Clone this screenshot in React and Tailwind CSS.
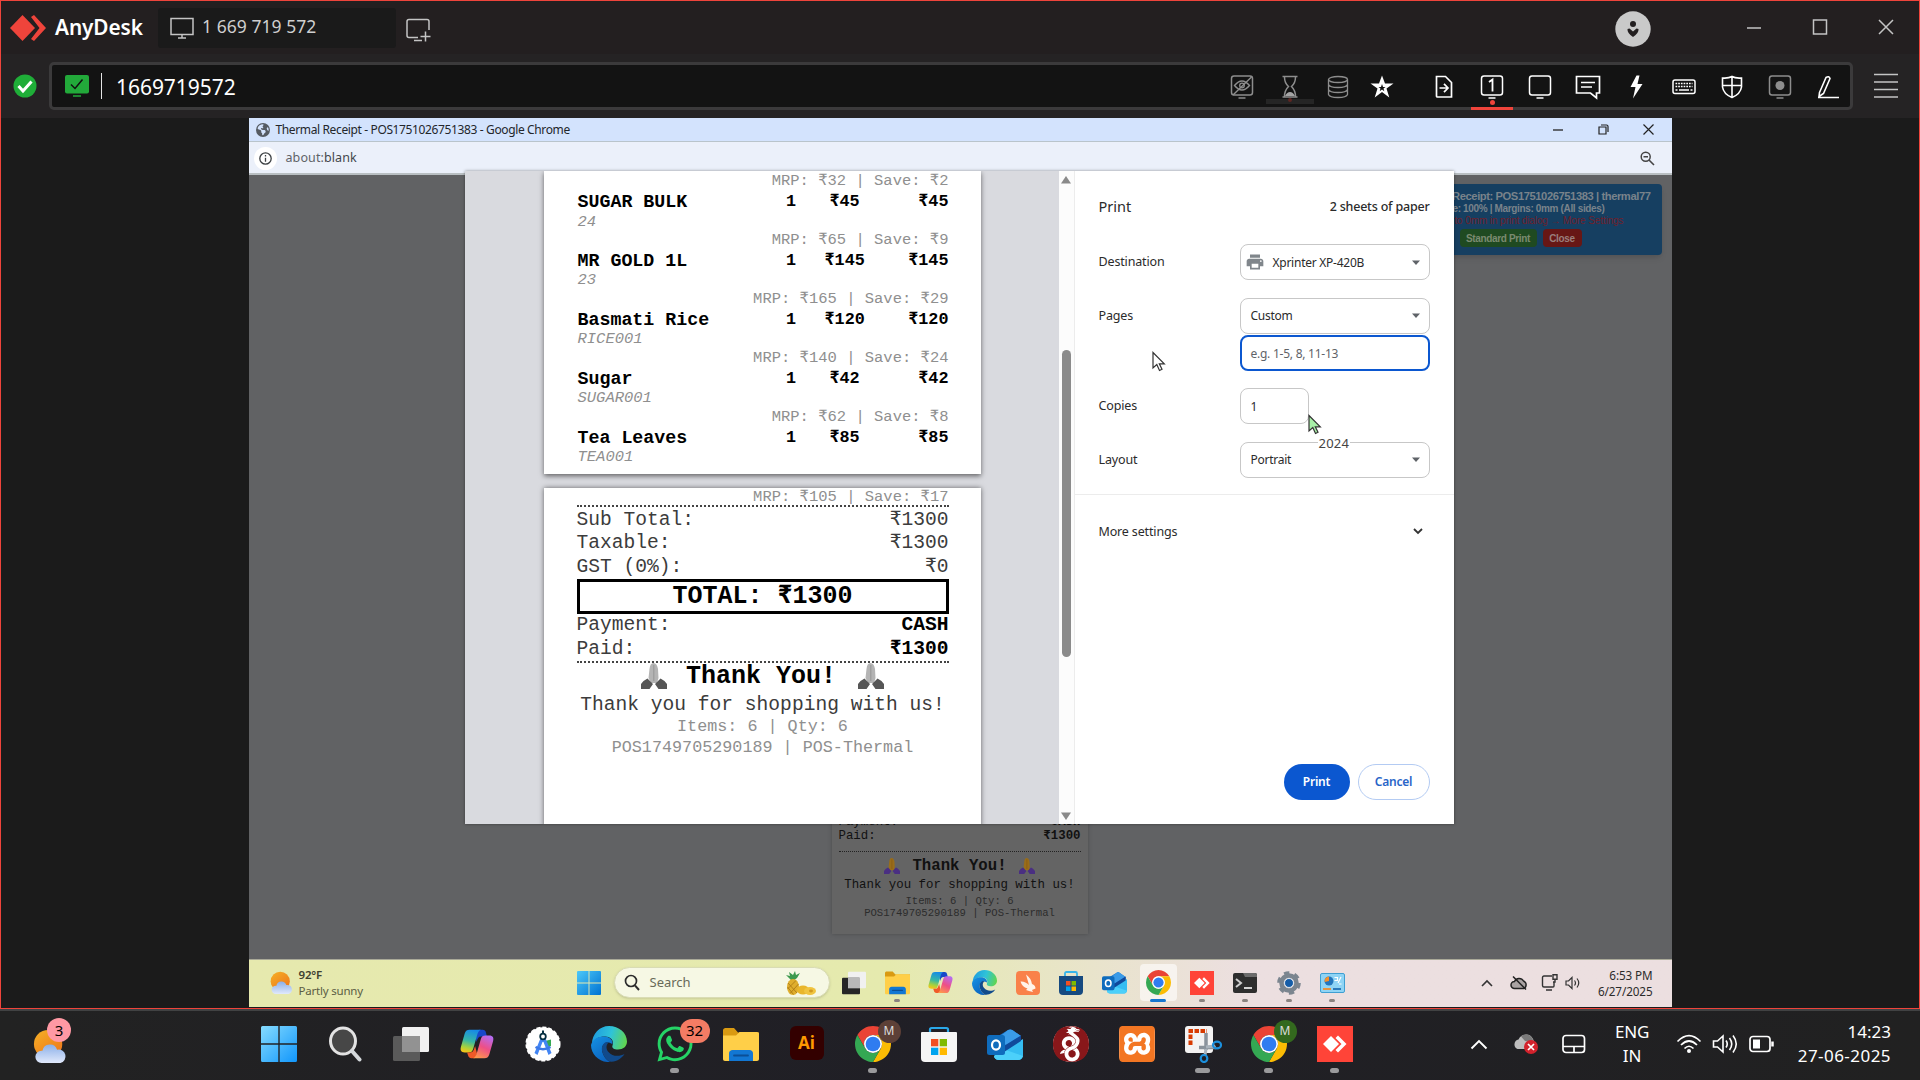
import React from "react";
import { SiWireguard, SiXampp } from "react-icons/si";
import { FaWhatsapp } from "react-icons/fa6";
import { FaEarthAmericas } from "react-icons/fa6";
import { MdPrint } from "react-icons/md";

const Svg = ({ w = 24, h, box, className = "", children }) => (
  <svg width={w} height={h ?? w} viewBox={box ?? `0 0 ${w} ${h ?? w}`} fill="none" className={`shrink-0 ${className}`}>
    {children}
  </svg>
);

/* ---------- application icons ---------- */

const Chrome = ({ size = 36 }) => (
  <Svg w={size} box="2 2 44 44">
    <path d="M24 13H43.05A22 22 0 0 0 4.95 13L14.5 29.5A11 11 0 0 1 24 13z" fill="#ea4335" />
    <path d="M24 13H43.05A22 22 0 0 1 24 46L33.5 29.5A11 11 0 0 0 24 13z" fill="#fbbc04" />
    <path d="M14.5 29.5L4.95 13A22 22 0 0 0 24 46L33.5 29.5A11 11 0 0 1 14.5 29.5z" fill="#34a853" />
    <circle cx="24" cy="24" r="11" fill="#fff" />
    <circle cx="24" cy="24" r="9" fill="#2f7cf0" />
  </Svg>
);

const Edge = ({ size = 36, id }) => (
  <Svg w={size} box="0 0 36 36">
    <defs>
      <linearGradient id={`${id}a`} x1="2" y1="8" x2="35" y2="18" gradientUnits="userSpaceOnUse">
        <stop stopColor="#1f9ee0" />
        <stop offset=".5" stopColor="#2fc3d8" />
        <stop offset="1" stopColor="#62d64d" />
      </linearGradient>
      <linearGradient id={`${id}b`} x1="4" y1="12" x2="22" y2="34" gradientUnits="userSpaceOnUse">
        <stop stopColor="#148ce0" />
        <stop offset="1" stopColor="#0a5cb8" />
      </linearGradient>
    </defs>
    <path d="M1 18C1 8 8.500 0 18 0 28 0 36 7 36 15.500 36 20.500 32 23.500 27 23.500 23 23.500 20.500 22 21.500 19.500 23.500 15 20 10.500 14 10.500 8 10.500 3 13 1 18z" fill={`url(#${id}a)`} />
    <path d="M0 19C1.500 13 7 10.500 13 10.500 19 10.500 22.500 15 21.300 18 17 14.500 11 17 11 23 11 30 17.500 36 20 36 9 37 0 29 0 19z" fill={`url(#${id}b)`} />
    <path d="M15 16C11.500 18 10.500 21 11 24.500 12 31 17.500 36 20.500 35.800 26.500 35.300 31 32 33.500 28 29 30.500 21.500 31 17.500 26 15 23 14.500 19 18 16.200z" fill="#114a8b" />
  </Svg>
);

const Copilot = ({ size = 36, id }) => (
  <Svg w={size} box="0 0 36 36">
    <defs>
      <linearGradient id={`${id}a`} x1="14" y1="3" x2="8" y2="27" gradientUnits="userSpaceOnUse">
        <stop stopColor="#1689e8" />
        <stop offset=".5" stopColor="#37b8a5" />
        <stop offset=".8" stopColor="#a8d23c" />
        <stop offset="1" stopColor="#f5c518" />
      </linearGradient>
      <linearGradient id={`${id}b`} x1="30" y1="9" x2="18" y2="33" gradientUnits="userSpaceOnUse">
        <stop stopColor="#b56cf2" />
        <stop offset=".5" stopColor="#ee4f86" />
        <stop offset="1" stopColor="#ff9a4a" />
      </linearGradient>
    </defs>
    <path d="M21 3h3c2 0 3 1 3.500 3l1 4h-6c-3 0-4 2-5 6l-1-7c.5-4 2-6 4.500-6z" fill="#1747c9" />
    <path d="M10 3h12c-2 .8-3 2.500-4 6l-4 14c-1 3-2 4-5 4H5c-4 0-5-2.500-4-6L5 7c1-3 2.500-4 5-4z" fill={`url(#${id}a)`} />
    <path d="M15 33h-3c-2 0-3-1-3.500-3l-1-3H10c3 0 4-1 5-4l1-3 2 8c-.5 3-1 5-3 5z" fill="#f05a28" />
    <path d="M26 33H14c2-.8 3-2.500 4-6l4-14c1-3 2-4 5-4h4c4 0 5 2.500 4 6l-4 14c-1 3-2.500 4-5 4z" fill={`url(#${id}b)`} />
  </Svg>
);

const Outlook = ({ size = 36 }) => (
  <Svg w={size} box="0 0 36 36">
    <path d="M8 12L21 4c1.500-.8 3-.8 4.300 0L34 10v4L10 26z" fill="#1a72c8" />
    <path d="M21 4c1.500-.8 3-.8 4.300 0L34 10l-15 9-9-6z" fill="#3a9be8" />
    <path d="M36 13v16c0 3-2 5-5 5H12c-3 0-5-2-5-4z" fill="#35bdf2" />
    <path d="M16 23l20 7c-1 2.500-3 4-5 4H12c-3 0-5-2-5-4z" fill="#4cd0fa" />
    <path d="M34 9.500V15L17 26v-6z" fill="#10499b" />
    <rect x="0" y="9" width="18" height="20" rx="2.500" fill="#0f6cbd" />
    <ellipse cx="9" cy="19" rx="4" ry="4.700" stroke="#fff" strokeWidth="2.200" />
  </Svg>
);

const Folder = ({ size = 36 }) => (
  <Svg w={size} box="0 0 36 36">
    <path d="M0 4.500C0 3 1 2 2.500 2H11l4 4.500H36V30H0z" fill="#d99a12" />
    <path d="M0 9.500h13L16.500 6H34c1.200 0 2 .8 2 2v25c0 1-.8 2-2 2H2c-1.200 0-2-.8-2-2z" fill="#ffcf48" />
    <path d="M6 35v-7.500c0-2 1.500-3.500 3.500-3.500h17c2 0 3.500 1.500 3.500 3.500V35z" fill="#1277d3" />
    <path d="M11 29.500h14" stroke="#0b4f96" strokeWidth="1.800" strokeLinecap="round" />
  </Svg>
);

const Start = ({ size = 36, id }) => (
  <Svg w={size} box="0 0 36 36">
    <defs>
      <linearGradient id={id} x1="0" y1="0" x2="36" y2="36" gradientUnits="userSpaceOnUse">
        <stop stopColor={size > 30 ? "#86dcff" : "#4cc8f8"} />
        <stop offset="1" stopColor={size > 30 ? "#1196fb" : "#0072d2"} />
      </linearGradient>
    </defs>
    <path d="M1.500 0H17.300V17.300H0V1.500Q0 0 1.500 0zM18.700 0H34.500Q36 0 36 1.500V17.300H18.700zM0 18.700H17.300V36H1.500Q0 36 0 34.500zM18.700 18.700H36V34.500Q36 36 34.500 36H18.700z" fill={`url(#${id})`} />
  </Svg>
);

const TaskView = ({ size = 36, dark }) => (
  <Svg w={size} box="0 0 36 36">
    <rect x="9" y="1" width="27" height="25" rx="1.500" fill="#f1f1f1" />
    <rect x="0" y="10" width="27" height="25" rx="1.500" fill={dark ? "#262626" : "#5a5a5a"} />
    <path d="M9 10h18v16H9z" fill={dark ? "#b9b9b9" : "#929292"} />
  </Svg>
);

const Weather = ({ size = 36, id }) => (
  <Svg w={size} box="0 0 36 36">
    <defs>
      <linearGradient id={`${id}s`} x1="4" y1="2" x2="24" y2="28" gradientUnits="userSpaceOnUse">
        <stop stopColor="#f5ad25" />
        <stop offset="1" stopColor="#ee7a1c" />
      </linearGradient>
      <linearGradient id={`${id}c`} x1="18" y1="16" x2="18" y2="36" gradientUnits="userSpaceOnUse">
        <stop stopColor="#89aee8" />
        <stop offset="1" stopColor="#e1e9fb" />
      </linearGradient>
    </defs>
    <circle cx="16" cy="16" r="15" fill={`url(#${id}s)`} />
    <path d="M9 36a6.500 6.500 0 0 1 0-13h1a8 8 0 0 1 15.500-1A7 7 0 0 1 29 36z" fill={`url(#${id}c)`} />
  </Svg>
);

const AnyDeskTile = ({ size = 36 }) => (
  <Svg w={size} box="0 0 36 36">
    <path d="M0 0h36v36H0z" fill="#ff4438" />
    <path d="M14 10l8 8-8 8-8-8zM18.500 12l2.500-2.500 8.500 8.500-8.500 8.500-2.500-2.500 6-6z" fill="#fff" />
  </Svg>
);

const StoreLight = () => (
  <Svg w={36}>
    <path d="M9 7V3.500Q9 2 10.500 2h15Q27 2 27 3.500V7" stroke="#2aa8e8" strokeWidth="2.200" />
    <path d="M0 7Q0 6 1 6H35Q36 6 36 7V32Q36 36 32 36H4Q0 36 0 32z" fill="#f5f5f5" />
    <path d="M10 13h7.300v7.300H10z" fill="#f25022" />
    <path d="M18.700 13H26v7.300h-7.300z" fill="#7fba00" />
    <path d="M10 21.700h7.300V29H10z" fill="#00a4ef" />
    <path d="M18.700 21.700H26V29h-7.300z" fill="#ffb900" />
  </Svg>
);

const StoreDark = () => (
  <Svg w={24} h={24}>
    <path d="M6 6V2.500Q6 1 7.500 1h9Q18 1 18 2.500V6" stroke="#37b5ea" strokeWidth="1.800" />
    <path d="M0 5H24V20Q24 24 20 24H4Q0 24 0 20z" fill="#164a80" />
    <path d="M7 10h4.500v4.500H7z" fill="#f25022" />
    <path d="M12.500 10H17v4.500h-4.500z" fill="#7fba00" />
    <path d="M7 15.500h4.500V20H7z" fill="#00a4ef" />
    <path d="M12.500 15.500H17V20h-4.500z" fill="#ffb900" />
  </Svg>
);

const Snip = () => (
  <Svg w={38} h={38}>
    <rect x="1" y="1" width="28" height="27" rx="3" fill="#f3f3f3" />
    <path d="M6.500 20V6H23" stroke="#d83b01" strokeWidth="4" strokeDasharray="4.500 1.500" />
    <path d="M22 8v17M15 22.500h17" stroke="#8a939c" strokeWidth="3.500" />
    <path d="M22 22l9-1M22 24l-1 6" stroke="#aab4bd" strokeWidth="3" />
    <ellipse cx="33" cy="20" rx="4" ry="3.300" stroke="#1b8fdc" strokeWidth="2.200" />
    <ellipse cx="20" cy="33.500" rx="3.300" ry="3.500" stroke="#1b8fdc" strokeWidth="2.200" />
  </Svg>
);

const AndroidStudio = () => (
  <Svg w={36}>
    <circle cx="18" cy="18" r="16.800" fill="#fff" strokeDasharray="4 2" stroke="#fff" strokeWidth="1.500" />
    <path d="M20 15l6-1.500v6.500l-4 2z" fill="#34a853" />
    <path d="M16 11h4l6.500 16-3 2L18.500 16h-1L12.500 29l-3-2z" fill="#4285f4" />
    <path d="M10.500 21q7.500 4.500 15 0" stroke="#3b78e7" strokeWidth="2.500" />
    <circle cx="18" cy="10.500" r="2.800" stroke="#073042" strokeWidth="1.800" fill="#fff" />
    <path d="M18 4.500v3.500" stroke="#073042" strokeWidth="2" />
  </Svg>
);

const Fold = ({ size, mono, className }) => (
  <Svg w={size} box="0 0 26 26" className={className}>
    <path d="M8.500 6Q9 0 12.500 0T17 6L17.500 15 16 20H10L7.500 15z" fill={mono ? "#b4b4b4" : "#9a6d1a"} />
    <path d="M12.800 2v16" stroke={mono ? "#8e8e8e" : "#7c5412"} strokeWidth=".8" />
    <path d="M0 21Q3 17 6.500 15.500L12 21 8.500 26H0zM26 21Q23 17 19.500 15.500L14 21 17.500 26H26z" fill={mono ? "#565656" : "#4a2f82"} />
  </Svg>
);

/* ---------- AnyDesk chrome ---------- */

const Tool = ({ children, className = "w-12" }) => (
  <div className={`relative flex h-[41px] items-center justify-center ${className}`}>{children}</div>
);
const W = "#fff";
const MonitorFrame = ({ c, children }) => (
  <Svg w={26} h={30}>
    <rect x="2.500" y="4" width="21" height="19" rx="2.500" stroke={c} strokeWidth="1.500" />
    <path d="M9.500 26h7" stroke={c} strokeWidth="1.500" />
    {children}
  </Svg>
);

function TitleBar() {
  return (
    <div className="flex h-[53px] items-center bg-[#231f20] pl-[9px]">
      <Svg w={36} h={26}>
        <path d="M12.500 0L25 13 12.500 26 0 13z" fill="#ef443b" />
        <path d="M21 2l3-2 12 13-12 13-3-2 8.500-11z" fill="#ef443b" />
      </Svg>
      <div className="ml-[9px] w-[103px] pb-0.5 text-[20.800px] leading-6 font-semibold tracking-[-0.100px] text-white">AnyDesk</div>
      <div className="flex h-10 w-[238px] items-center rounded-[3px] bg-[#1a1a1a] pl-3">
        <Svg w={24} h={22}>
          <path d="M1 1.500h22v16H1zM12 18v3M8 21h8" stroke="#c4c4c4" strokeWidth="1.500" />
        </Svg>
        <span className="ml-2 pb-[3px] text-[17.500px] tracking-[0.050px] text-[#cfcfcf]">1 669 719 572</span>
      </div>
      <Svg w={26} h={24} className="mt-1 ml-[10px]">
        <path d="M12 19.500H3q-2 0-2-2V3.500q0-2 2-2h18q2 0 2 2V12M8 22.500h8" stroke="#c4c4c4" strokeWidth="1.500" />
        <path d="M19.500 13.500v10M14.500 18.500h10" stroke="#c4c4c4" strokeWidth="1.500" />
      </Svg>
      <div className="ml-auto flex items-center pb-0.5">
        <Svg w={36} className="mr-[95px] mt-[4px]">
          <circle cx="18" cy="18" r="17.700" fill="#c9c9c9" />
          <circle cx="18" cy="13" r="3" fill="#231f20" />
          <path d="M12.500 18l2-.5 3.500 3 3.500-3 2 .5q.5 4-5.500 8-6-4-5.500-8z" fill="#231f20" />
        </Svg>
        <Svg w={16} className="mr-[50px]"><path d="M1 9h14" stroke="#c4c4c4" strokeWidth="1.500" /></Svg>
        <Svg w={16} className="mr-[50px]"><path d="M1.500 1h13v14h-13z" stroke="#c4c4c4" strokeWidth="1.500" /></Svg>
        <Svg w={16} className="mr-[25px]"><path d="M1 1l14 14M15 1L1 15" stroke="#c4c4c4" strokeWidth="1.500" /></Svg>
      </div>
    </div>
  );
}

function ToolBar() {
  return (
    <div className="flex h-16 items-center bg-[#252324] pl-3">
      <Svg w={24}>
        <circle cx="12" cy="12" r="11.500" fill="#1fae38" />
        <path d="M5.500 12l4.500 5L18.500 7.500" stroke="#fff" strokeWidth="3" />
      </Svg>
      <div className="ml-3 flex h-12 w-[1804px] items-center rounded-[5px] border-[3px] border-[#3b3a3b] bg-[#131313] pl-[13px]">
        <Svg w={24} h={24}>
          <rect x="0" y="1" width="24" height="18.500" rx="2" fill="#22a93a" />
          <path d="M6 10.500l4 4 7.500-9" stroke="#101010" strokeWidth="1.500" />
          <path d="M8 22h8" stroke="#22a93a" strokeWidth="1.500" />
        </Svg>
        <div className="ml-3 h-[26px] w-px bg-[#e5e5e5]" />
        <span className="ml-[14px] pt-[3px] text-[21px] tracking-[-0.050px] text-white">1669719572</span>
        <div className="mr-[-4px] ml-auto flex items-center pt-0.5 pr-0.5">
          <Tool>
            <MonitorFrame c="#8d8d8d">
              <path d="M5.500 13.500q7.500-9 15 0-7.500 9-15 0zM22.500 5L4 23" stroke="#8d8d8d" strokeWidth="1.400" />
              <circle cx="13" cy="13.500" r="2.300" stroke="#8d8d8d" strokeWidth="1.300" />
            </MonitorFrame>
          </Tool>
          <Tool>
            <Svg w={20} h={24}>
              <path d="M2.500 1.500h15M2.500 22h15M4.500 2q0 6 4 9.500-4 4-4 10M15.500 2q0 6-4 9.500 4 4 4 10" stroke="#8d8d8d" strokeWidth="1.500" />
              <path d="M5 21q2-4 5-4t5 4z" fill="#a5a5a5" />
            </Svg>
            <div className="absolute bottom-1 h-[5px] w-12 bg-[#2b2b2b]/80" />
            <div className="absolute bottom-[6px] size-[4px] rounded-full bg-[#5e2623]" />
          </Tool>
          <Tool>
            <Svg w={22} h={24}>
              <ellipse cx="11" cy="4.500" rx="9.500" ry="3" stroke="#8d8d8d" strokeWidth="1.300" />
              <path d="M1.500 4.500v15q1 3 9.500 3t9.500-3v-15M1.500 9.500q1 3 9.500 3t9.500-3M1.500 14.500q1 3 9.500 3t9.500-3" stroke="#8d8d8d" strokeWidth="1.300" />
            </Svg>
          </Tool>
          <Tool className="w-10">
            <Svg w={24}>
              <path d="M12 .5l3 8h8.500l-7 5 2.800 9L12 17l-7.300 5.500 2.800-9-7-5H9zm0 8.500l-1 3H8.500l2 1.500-.8 2.700L12 14.500l2.300 1.700-.8-2.700 2-1.500H13z" fill={W} />
            </Svg>
          </Tool>
          <Tool className="ml-[18px] w-12">
            <Svg w={18} h={24}>
              <path d="M1.500 1.500h9l6 6v14.500q0 0-1 0h-13q-1 0-1-1z" stroke={W} strokeWidth="1.700" />
              <path d="M4.500 13h8M9 8.800l4 4.200-4 4.200" stroke={W} strokeWidth="1.700" />
            </Svg>
          </Tool>
          <Tool>
            <MonitorFrame c={W}>
              <path d="M10 10l3.500-2.500V19.500" stroke={W} strokeWidth="1.800" />
            </MonitorFrame>
            <div className="absolute bottom-[3px] size-[5px] rounded-full bg-[#ef443b]" />
            <div className="absolute bottom-[-2px] h-[3px] w-[42px] bg-[#ef443b]" />
          </Tool>
          <Tool><MonitorFrame c={W} /></Tool>
          <Tool>
            <Svg w={26} h={26}>
              <path d="M1.500 2.500h23v16.500h-3v5l-6-5h-14z" stroke={W} strokeWidth="1.700" />
              <path d="M6 8.500h14M6 13h11" stroke={W} strokeWidth="1.600" />
            </Svg>
          </Tool>
          <Tool>
            <Svg w={14} h={24}><path d="M7.500.5h3L8.500 9h5L4 23.500 6.500 12h-5z" fill={W} /></Svg>
          </Tool>
          <Tool>
            <Svg w={24} h={16}>
              <rect x="1" y="1" width="22" height="13.500" rx="2" stroke={W} strokeWidth="1.500" />
              <path d="M3.500 4.500h17M3.500 7.500h17" stroke={W} strokeWidth="1.700" strokeDasharray="1.700 1" />
              <path d="M3.500 11h2M7 11h10M18.500 11h2" stroke={W} strokeWidth="1.700" />
            </Svg>
          </Tool>
          <Tool>
            <Svg w={22} h={24}>
              <path d="M1.500 3q6 .5 9.500-1.500Q14.500 3.500 20.500 3v9q-1 7-9.500 10.500Q2.500 19 1.500 12zM11 1.500v21M1.500 10.500h19" stroke={W} strokeWidth="1.600" />
            </Svg>
          </Tool>
          <Tool><MonitorFrame c="#8d8d8d"><circle cx="13" cy="13.500" r="4.500" fill="#8d8d8d" /></MonitorFrame></Tool>
          <Tool>
            <Svg w={24} h={24}>
              <path d="M3.500 17.500L10 2.500q3-2 4 1L7.500 18.500 3 21.500zM2 22.500h21" stroke={W} strokeWidth="1.600" />
            </Svg>
          </Tool>
        </div>
      </div>
      <Svg w={24} h={26} className="ml-[21px]">
        <path d="M0 1.500h24M0 9h24M0 16.500h24M0 24h24" stroke="#c4c4c4" strokeWidth="1.600" />
      </Svg>
    </div>
  );
}

/* ---------- print preview ---------- */

const items = [
  ["SUGAR BULK", "₹45", "24", "MRP: ₹65 | Save: ₹9"],
  ["MR GOLD 1L", "₹145", "23", "MRP: ₹165 | Save: ₹29"],
  ["Basmati Rice", "₹120", "RICE001", "MRP: ₹140 | Save: ₹24"],
  ["Sugar", "₹42", "SUGAR001", "MRP: ₹62 | Save: ₹8"],
  ["Tea Leaves", "₹85", "TEA001", ""],
];

const Mrp = ({ children }) => (
  <div className="text-right text-[15.500px] leading-[18px] text-[#8f8f8f]">{children}</div>
);
const Line = ({ l, r, bold }) => (
  <div className="flex h-[23.500px] items-center justify-between text-[19.600px] text-[#3c3c3c]">
    <span>{l}</span>
    <span className={bold ? "font-bold text-black" : ""}>{r}</span>
  </div>
);

function Preview() {
  return (
    <div className="flex h-full w-[594px] flex-col items-center gap-[14px] overflow-hidden bg-[#d9dadf] pl-px font-['Liberation_Mono',monospace]">
      <div className="h-[303px] w-[437px] shrink-0 bg-white pt-px pr-[32px] pl-[34px] shadow-[0_2px_5px_rgba(0,0,0,0.550)]">
        <Mrp>MRP: ₹32 | Save: ₹2</Mrp>
        <div>
          {items.map(([name, price, sku, mrp]) => (
            <div key={name} className="h-[58.900px]">
              <div className="mb-[1.500px] grid h-[21px] grid-cols-[180px_67px_1fr_1fr] items-end text-[16.800px] leading-[18px] font-bold text-black">
                <span className="text-[18.300px] whitespace-nowrap">{name}</span>
                <span className="text-center">1</span>
                <span className="w-10 text-center">{price}</span>
                <span className="text-right">{price}</span>
              </div>
              <div className="h-[18.500px] text-[15.500px] leading-[18px] text-[#8f8f8f] italic">{sku}</div>
              <Mrp>{mrp}</Mrp>
            </div>
          ))}
        </div>
      </div>
      <div className="h-[340px] w-[437px] shrink-0 bg-white pr-[32px] pl-[33px] shadow-[0_0_5px_rgba(0,0,0,0.550)]">
        <div className="h-[17px]"><Mrp>MRP: ₹105 | Save: ₹17</Mrp></div>
        <div className="mb-[1.500px] border-t-2 border-dotted border-[#444]" />
        <Line l="Sub Total:" r="₹1300" />
        <Line l="Taxable:" r="₹1300" />
        <Line l="GST (0%):" r="₹0" />
        <div className="flex h-[35px] items-center justify-center border-[3px] border-black text-[25px] font-bold text-black">TOTAL: ₹1300</div>
        <Line l="Payment:" r="CASH" bold />
        <Line l="Paid:" r="₹1300" bold />
        <div className="border-t-2 border-dotted border-[#444]" />
        <div className="flex h-[28px] items-center justify-center text-[25px] font-bold text-black">
          <Fold size={26} mono className="-mt-[3px]" />
          <span className="mr-[22px] ml-[19px]">Thank You!</span>
          <Fold size={26} mono className="-mt-[3px]" />
        </div>
        <div className="text-center text-[19.600px] leading-[28px] whitespace-nowrap text-[#3c3c3c]">Thank you for shopping with us!</div>
        <div className="-mt-0.5 text-center text-[16.750px] leading-[20.500px] whitespace-nowrap text-[#8f8f8f]">
          <div>Items: 6 | Qty: 6</div>
          <div>POS1749705290189 | POS-Thermal</div>
        </div>
      </div>
    </div>
  );
}

function PreviewScroll() {
  return (
    <div className="flex w-4 flex-col items-center border-r border-[#ececec] bg-[#fcfcfc]">
      <Svg w={10} h={8} className="mt-[5px]"><path d="M5 0l5 7.500H0z" fill="#8a8a8a" /></Svg>
      <div className="mt-[166px] h-[307px] w-[9px] rounded-full bg-[#8b8b8b]" />
      <Svg w={10} h={8} className="mt-auto mb-[4px]"><path d="M5 8L0 .5h10z" fill="#8a8a8a" /></Svg>
    </div>
  );
}

const Caret = () => <Svg w={8} h={5}><path d="M0 .5h8L4 5z" fill="#5f6368" /></Svg>;
const Field = ({ label, children, className }) => (
  <div className={`flex h-9 items-center justify-between ${className}`}>
    <span className="pt-px text-[12.500px] tracking-[-0.150px]">{label}</span>
    {children}
  </div>
);
const Select = ({ icon, value }) => (
  <div className="flex h-9 w-[190px] items-center rounded-lg border border-[#c7c7c7] bg-white pr-[9px] pl-[10px]">
    {icon}
    <span className="pt-px text-[12px] tracking-[-0.250px]">{value}</span>
    <span className="ml-auto"><Caret /></span>
  </div>
);

function PrintDialog() {
  return (
    <div className="absolute top-[53px] left-[216px] flex h-[653px] w-[989px] overflow-hidden bg-white text-[#2b2b2b] shadow-[0_0_3px_rgba(0,0,0,0.400)]">
      <Preview />
      <PreviewScroll />
      <div className="flex flex-1 flex-col">
        <div className="pt-[24px] pr-6 pl-[24px]">
          <div className="flex h-6 items-center justify-between">
            <span className="text-[14.500px]">Print</span>
            <span className="text-[12.500px] tracking-[-0.200px] font-medium">2 sheets of paper</span>
          </div>
          <Field label="Destination" className="mt-[25px]">
            <Select icon={<MdPrint className="mr-[8px] -ml-[6px] size-[20px] text-[#80868b]" />} value="Xprinter XP-420B" />
          </Field>
          <Field label="Pages" className="mt-[17.500px]"><Select value="Custom" /></Field>
          <div className="mt-[1.500px] ml-auto flex h-9 w-[190px] items-center rounded-lg border-2 border-[#0b57d0] pt-px pl-[9px] text-[12px] tracking-[-0.250px] text-[#5f6368]">e.g. 1-5, 8, 11-13</div>
          <Field label="Copies" className="mt-[17px]">
            <div className="mr-[121px] flex h-9 w-[69px] items-center rounded-lg border border-[#c7c7c7] pt-px pl-[10px] text-[12px]">1</div>
          </Field>
          <Field label="Layout" className="mt-[17.500px]"><Select value="Portrait" /></Field>
        </div>
        <div className="mt-4 border-t border-[#ececec]" />
        <div className="flex items-center justify-between pt-[28px] pr-6 pl-[24px]">
          <span className="text-[12.500px] tracking-[-0.150px]">More settings</span>
          <Svg w={10} h={7} className="mr-[7px]"><path d="M1 1l4 4 4-4" stroke="#333" strokeWidth="1.800" /></Svg>
        </div>
        <div className="mt-auto mb-[24px] flex justify-end gap-2 px-6 text-[12px] font-semibold tracking-[-0.200px]">
          <div className="flex h-9 w-[66px] items-center justify-center rounded-full bg-[#0b57d0] text-white">Print</div>
          <div className="flex h-9 w-[72px] items-center justify-center rounded-full border border-[#b3cbf3] text-[#2865c8]">Cancel</div>
        </div>
      </div>
    </div>
  );
}

/* ---------- remote desktop ---------- */

function BackgroundPage() {
  return (
    <div className="relative flex-1 overflow-hidden bg-[#616264]">
      <div className="absolute top-[9px] right-[10px] h-[71px] w-[340px] rounded bg-[#163f61] pt-[5px] text-center font-['Liberation_Sans',sans-serif] text-[10px] font-bold whitespace-nowrap text-[#79838b] shadow-md">
        <div className="pr-[11px] text-right text-[11.200px] leading-[14px] tracking-[-0.420px]">Thermal Receipt: POS1751026751383 | thermal77</div>
        <div className="pr-[57px] text-right leading-3 tracking-[-0.350px]">Scale: 100% | Margins: 0mm (All sides)</div>
        <div className="pr-[38px] text-right leading-3 font-normal tracking-[-0.100px] text-[#6f1f2c]">Set margins to 0mm in print dialog → More Settings</div>
        <div className="mt-[2px] flex justify-end gap-1.5 pr-20">
          <div className="flex h-[18px] w-[77px] items-center justify-center rounded-sm bg-[#1f4a21] tracking-[-0.350px] text-[#7b8a70]">Standard Print</div>
          <div className="flex h-[18px] w-[39px] items-center justify-center rounded-sm bg-[#671715] tracking-[-0.300px] text-[#9a7f7c]">Close</div>
        </div>
      </div>
      <div className="absolute bottom-[25px] left-[583px] flex h-[150px] w-[256px] flex-col justify-end bg-[#646464] px-[7px] pb-[15px] font-['Liberation_Mono',monospace] text-[12.400px] text-[#111] shadow-[0_0_4px_rgba(0,0,0,0.250)]">
        <div className="flex h-[13px] items-center justify-between"><span>Payment:</span><b>CASH</b></div>
        <div className="flex h-[14px] items-center justify-between"><span>Paid:</span><b>₹1300</b></div>
        <div className="mt-[8px] border-t border-dotted border-[#222]" />
        <div className="mt-[5px] flex h-[20px] items-center justify-center text-[15.700px] font-bold">
          <Fold size={16} className="-mt-0.5" /><span className="mx-3">Thank You!</span><Fold size={16} className="-mt-0.5" />
        </div>
        <div className="text-center leading-[17px] whitespace-nowrap">Thank you for shopping with us!</div>
        <div className="pt-px text-center text-[10.600px] leading-[12px] whitespace-nowrap text-[#2c2c2c]">
          <div>Items: 6 | Qty: 6</div>
          <div>POS1749705290189 | POS-Thermal</div>
        </div>
      </div>
    </div>
  );
}

const RApp = ({ children, dot, active }) => (
  <div className="relative flex h-[47px] w-[43.500px] shrink-0 items-center justify-center">
    {active && <div className="absolute h-[37px] w-[37px] rounded bg-white/60" />}
    <div className="relative">{children}</div>
    {dot && <div className="absolute bottom-[4px] h-[3px] w-1.5 rounded-full bg-[#8a8380]" />}
    {active && <div className="absolute bottom-[4px] h-[3px] w-4 rounded-full bg-[#1577cf]" />}
  </div>
);

function RemoteTaskbar() {
  return (
    <div className="flex h-[48px] items-center border-t border-[#a9a998] bg-linear-to-r from-[#e6e9ae] via-[#e5eaae] via-45% to-[#ecdfe0] to-70% pb-0.5">
      <div className="flex w-[328px] items-center pl-[21px]">
        <Weather size={23} id="rw" />
        <div className="ml-[6px] text-[11.500px] leading-4 tracking-[-0.200px] text-[#3e4030]">
          <div className="font-semibold">92°F</div>
          <div className="text-[#5b5d44]">Partly sunny</div>
        </div>
      </div>
      <Start size={24} id="rs" />
      <div className="ml-[13px] flex h-[31px] w-[216px] items-center rounded-full border border-[#d9dcb4] bg-[#f6f8e4] pr-3 pl-[9px] shadow-sm">
        <Svg w={16} h={17}><circle cx="7" cy="7" r="5.500" stroke="#2b2b2b" strokeWidth="1.700" /><path d="M11 11.500l4 4.500" stroke="#2b2b2b" strokeWidth="1.900" /></Svg>
        <span className="ml-2.5 text-[13px] text-[#686a58]">Search</span>
        <Svg w={32} h={24} className="ml-auto">
          <path d="M6 9L1 4l4 1-1-4 4 3 2-4 1 4 4-2-3 5-4 3z" fill="#3d9a4e" />
          <ellipse cx="8" cy="16" rx="6" ry="8" fill="#dfae2d" />
          <path d="M3 12l9 10M2.500 16l6 7.500M13.500 13L5 22.500M11 9.500L2.500 18" stroke="#a87613" strokeWidth=".8" />
          <ellipse cx="18" cy="19" rx="6" ry="4.500" fill="#e9b62c" />
          <ellipse cx="25" cy="20" rx="6" ry="4" fill="#f0c440" />
          <ellipse cx="26" cy="20" rx="2" ry="1.400" fill="#d29a20" />
        </Svg>
      </div>
      <div className="ml-[2.500px] flex">
        <RApp><TaskView size={24} dark /></RApp>
        <RApp dot><Folder size={25} /></RApp>
        <RApp><Copilot size={25} id="rc" /></RApp>
        <RApp><Edge size={25} id="re" /></RApp>
        <RApp>
          <Svg w={24}>
            <rect width="24" height="24" rx="4" fill="#f9814a" />
            <path d="M4.500 10.500Q9 10 13 14L10 3.500Q15 7 16 13q3.500 1 3.500 4.500L16 19l1 2-4-1-3-1 1.500-1.500Q6 16 4.500 10.500z" fill="#fff3ea" />
          </Svg>
        </RApp>
        <RApp><StoreDark /></RApp>
        <RApp><Outlook size={25} /></RApp>
        <RApp active><Chrome size={25} /></RApp>
        <RApp dot><AnyDeskTile size={24} /></RApp>
        <RApp dot>
          <Svg w={24} h={20}>
            <rect width="24" height="20" rx="2" fill="#2e2e2e" />
            <path d="M0 0h10l2 4h12v-2q0-2-2-2z" fill="#6c6c6c" />
            <path d="M3 6l5 4-5 4" stroke="#d0d0d0" strokeWidth="2" />
            <path d="M11 15h8" stroke="#e8e8e8" strokeWidth="1.800" />
          </Svg>
        </RApp>
        <RApp dot>
          <Svg w={24}>
            <circle cx="12" cy="12" r="7.500" stroke="#7b858f" strokeWidth="4.500" />
            <circle cx="12" cy="12" r="10.300" stroke="#7b858f" strokeWidth="3" strokeDasharray="5.400 5.390" />
            <circle cx="12" cy="12" r="4.500" fill="#155da8" stroke="#dfe6ec" strokeWidth="1" />
          </Svg>
        </RApp>
        <RApp dot>
          <Svg w={25} h={20}>
            <rect x=".5" y=".5" width="24" height="19" rx="1.500" fill="#8fd4f5" stroke="#3f9fd2" />
            <circle cx="9" cy="8" r="4.500" fill="#2476bd" /><path d="M9 8V3.500A4.500 4.500 0 0 0 4.700 9z" fill="#f5902b" />
            <path d="M14.500 4.500h3v3h-3M18 10l3-6M19 11h2.500" stroke="#fff" strokeWidth="1.200" />
            <path d="M3 16h8" stroke="#ef8e2e" strokeWidth="1.800" /><path d="M13 16h8" stroke="#1f6fb5" strokeWidth="1.800" />
          </Svg>
        </RApp>
      </div>
      <div className="mr-[19px] ml-auto flex items-center text-[#2b2b2b]">
        <Svg w={12} h={8} className="mr-[17px]"><path d="M1 7l5-5 5 5" stroke="#333" strokeWidth="1.600" /></Svg>
        <Svg w={18} h={14} className="mr-[13px]">
          <path d="M4.500 12.500a3.500 3.500 0 0 1 0-7A5 5 0 0 1 13.500 5a4 4 0 0 1 0 7.500z" fill="#aaa3a3" stroke="#222" strokeWidth="1.500" />
          <path d="M3 .5l13 13" stroke="#222" strokeWidth="1.500" />
        </Svg>
        <Svg w={18} h={17} className="mr-[6px]">
          <path d="M11 2H3Q1.500 2 1.500 3.500v8Q1.500 13 3 13h9q1 0 1-1V8M5 16h6M12 .8h4v4.500h-4zM14 5.500V8h-2" stroke="#333" strokeWidth="1.400" />
        </Svg>
        <Svg w={16} h={14} className="mr-[15px]">
          <path d="M1 5h2.500L7 1.500v11L3.500 9H1zM9.500 4.500q2 2.500 0 5M12 2.500q3.500 4.500 0 9" stroke="#333" strokeWidth="1.200" />
        </Svg>
        <div className="w-[57px] text-right text-[11.700px] leading-4 tracking-[-0.100px] whitespace-nowrap">
          <div>6:53 PM</div>
          <div>6/27/2025</div>
        </div>
      </div>
    </div>
  );
}

const Pointer = ({ fill }) => (
  <Svg w={14} h={21}><path d="M1 1.500v15.500l3.800-3.500 2.700 6 2.500-1.200-2.700-5.500h5z" fill={fill} stroke="#333" strokeWidth="1.200" /></Svg>
);

function Remote() {
  return (
    <div className="relative mx-auto flex h-[889px] w-[1423px] flex-col bg-white">
      <div className="flex h-6 items-center border-b border-[#b9c4cb] bg-[#d3e3fd] pl-[7px] text-[#23262b]">
        <FaEarthAmericas className="size-[14px] text-[#555b63]" />
        <span className="ml-1.5 text-[12px] tracking-[-0.370px]">Thermal Receipt - POS1751026751383 - Google Chrome</span>
        <div className="ml-auto flex items-center pr-[18px]">
          <Svg w={10} className="mr-[35px]"><path d="M0 5h10" stroke="#222" strokeWidth="1.300" /></Svg>
          <Svg w={11} className="mr-[34px]"><path d="M1 3h7v7H1zM3 1h5.500q1.500 0 1.500 1.500V8" stroke="#222" strokeWidth="1.200" /></Svg>
          <Svg w={11}><path d="M.5.500l10 10M10.500.500l-10 10" stroke="#222" strokeWidth="1.200" /></Svg>
        </div>
      </div>
      <div className="flex h-[33px] items-center border-b-2 border-[#b9bfc2] bg-[#ebf0fa] pt-px pl-[5px]">
        <div className="flex size-[23px] items-center justify-center rounded-full bg-white">
          <Svg w={13}><circle cx="6.500" cy="6.500" r="5.700" stroke="#3c4043" strokeWidth="1.300" /><path d="M6.500 5.800v4M6.500 3v1.400" stroke="#3c4043" strokeWidth="1.300" /></Svg>
        </div>
        <span className="ml-[9px] pt-px text-[12.500px] tracking-[0.100px] text-[#5f6368]">about:<span className="text-[#43474b]">blank</span></span>
        <Svg w={15} className="mr-[17px] ml-auto">
          <circle cx="5.700" cy="5.700" r="4.500" stroke="#444" strokeWidth="1.500" /><path d="M3.500 5.700h4.500M9 9l5 5" stroke="#444" strokeWidth="1.600" />
        </Svg>
      </div>
      <BackgroundPage />
      <RemoteTaskbar />
      <PrintDialog />
      <div className="absolute top-[233px] left-[903px]"><Pointer fill="#fff" /></div>
      <div className="absolute top-[296px] left-[1059px]"><Pointer fill="#a8f0a8" /></div>
      <div className="absolute top-[317px] left-[1069px] bg-white px-px text-[13px] leading-[16px] tracking-[0.200px] text-[#444]">2024</div>
    </div>
  );
}

/* ---------- local taskbar ---------- */

const App_ = ({ children, dot, badge, badgeClass }) => (
  <div className="relative flex h-[69px] w-[66px] items-center justify-center">
    {children}
    {badge && (
      <div className={`absolute top-[10px] left-[38px] flex size-[23px] items-center justify-center rounded-full text-[12px] ${badgeClass}`}>{badge}</div>
    )}
    {dot && <div className={`absolute bottom-[6px] h-[5px] rounded-full bg-[#9a9a9c] ${dot}`} />}
  </div>
);

function LocalTaskbar() {
  return (
    <div className="flex h-[71px] items-center border-t-2 border-[#414243] bg-linear-to-r from-[#222222] via-[#201f26] to-[#212121] pb-[3px]">
      <div className="relative ml-[33px] w-[212.500px] pt-1">
        <Weather size={34} id="lw" />
        <div className="absolute top-[-7px] left-[14px] flex size-[24px] items-center justify-center rounded-full bg-[#ff99a4] text-[15px] text-black">3</div>
      </div>
      <div className="flex">
        <App_><Start id="ls" /></App_>
        <App_>
          <Svg w={34} h={36}>
            <ellipse cx="15" cy="15" rx="12.500" ry="13" fill="#474747" stroke="#e3e3e3" strokeWidth="3" />
            <path d="M24 25l7.500 8.500" stroke="#d5d9dc" strokeWidth="4" strokeLinecap="round" />
          </Svg>
        </App_>
        <App_><TaskView /></App_>
        <App_><Copilot size={34} id="lc" /></App_>
        <App_><AndroidStudio /></App_>
        <App_><Edge id="le" /></App_>
        <App_ dot="w-[9px]">
          <FaWhatsapp className="size-[40px] text-[#25d366]" />
          <div className="absolute top-[9px] left-[38px] flex h-[24px] w-[30px] items-center justify-center rounded-full bg-[#f47c64] text-[15px] text-black">32</div>
        </App_>
        <App_><Folder /></App_>
        <App_>
          <div className="mb-[3px] flex size-[34px] items-center justify-center rounded-md bg-[#330000] text-[17px] font-bold text-[#ff9a00] font-['Open_Sans',sans-serif]">Ai</div>
        </App_>
        <App_ dot="w-[9px]" badge="M" badgeClass="bg-[#5d4037] text-[#ddd]"><Chrome /></App_>
        <App_><StoreLight /></App_>
        <App_><Outlook /></App_>
        <App_>
          <div className="flex size-[36px] items-center justify-center rounded-full bg-white"><SiWireguard className="size-[36px] text-[#88171a]" /></div>
        </App_>
        <App_>
          <div className="flex size-[36px] items-center justify-center rounded-md bg-white"><SiXampp className="size-[36px] text-[#f37623]" /></div>
        </App_>
        <App_ dot="w-[15px]"><Snip /></App_>
        <App_ dot="w-[9px]" badge="M" badgeClass="bg-[#33691e] text-[#ddd]"><Chrome /></App_>
        <App_ dot="w-[9px]"><AnyDeskTile /></App_>
      </div>
      <div className="mr-[29px] ml-auto flex items-center text-[17px] leading-[24px] text-white">
        <Svg w={18} h={11} className="mr-[25px]"><path d="M1.500 9.500L9 2l7.500 7.500" stroke="#fff" strokeWidth="1.900" /></Svg>
        <Svg w={26} h={22} className="mr-[23px]">
          <path d="M4.500 16a5 5 0 0 1 1-9.500A8 8 0 0 1 20 6q2 3 0 10z" fill="#bdbdbd" />
          <path d="M8 3.500Q13-1 18 3.500 20 5 20 9L12 8z" fill="#7a7a7a" />
          <circle cx="18" cy="14" r="7" fill="#d3222c" /><path d="M15 11l6 6M21 11l-6 6" stroke="#fff" strokeWidth="1.700" />
        </Svg>
        <Svg w={24} h={20} className="mr-[28px]">
          <rect x="1" y="1.500" width="21.500" height="17" rx="3" stroke="#fff" strokeWidth="1.700" /><path d="M1 12.500h21.500M12 12.500v6" stroke="#fff" strokeWidth="1.700" />
        </Svg>
        <div className="mr-[26px] w-[36px] text-center tracking-[-0.200px]"><div>ENG</div><div>IN</div></div>
        <Svg w={26} h={20} className="mr-[10px]">
          <path d="M1.500 7.500Q13-4 24.500 7.500M5 11q8-8 16 0M8.500 14.500q4.500-4.500 9 0" stroke="#fff" strokeWidth="1.700" /><circle cx="13" cy="17" r="2" fill="#fff" />
        </Svg>
        <Svg w={26} h={22} className="mr-[11px]">
          <path d="M1.500 8h4L11 3v16l-5.500-5h-4zM14 7.500q2.500 3.500 0 7M17.500 5q4.500 6 0 12M21 2.500q6.500 8.500 0 17" stroke="#fff" strokeWidth="1.600" />
        </Svg>
        <Svg w={25} h={18} className="mr-[23px]">
          <rect x="1" y="1.500" width="20" height="15" rx="3" stroke="#fff" strokeWidth="1.700" /><path d="M4 4.500h7v9H4z" fill="#fff" /><path d="M23.500 6.500v5" stroke="#fff" strokeWidth="2.500" />
        </Svg>
        <div className="w-[94px] pb-px text-right whitespace-nowrap"><div>14:23</div><div className="tracking-[0.450px]">27-06-2025</div></div>
      </div>
    </div>
  );
}

export default function App() {
  return (
    <div className="h-[1080px] w-[1920px] overflow-hidden bg-[#1b1b1b] font-['Noto_Sans','Open_Sans',sans-serif]">
      <div className="h-[1009px] border border-[#ef443b]">
        <TitleBar />
        <ToolBar />
        <Remote />
      </div>
      <LocalTaskbar />
    </div>
  );
}
